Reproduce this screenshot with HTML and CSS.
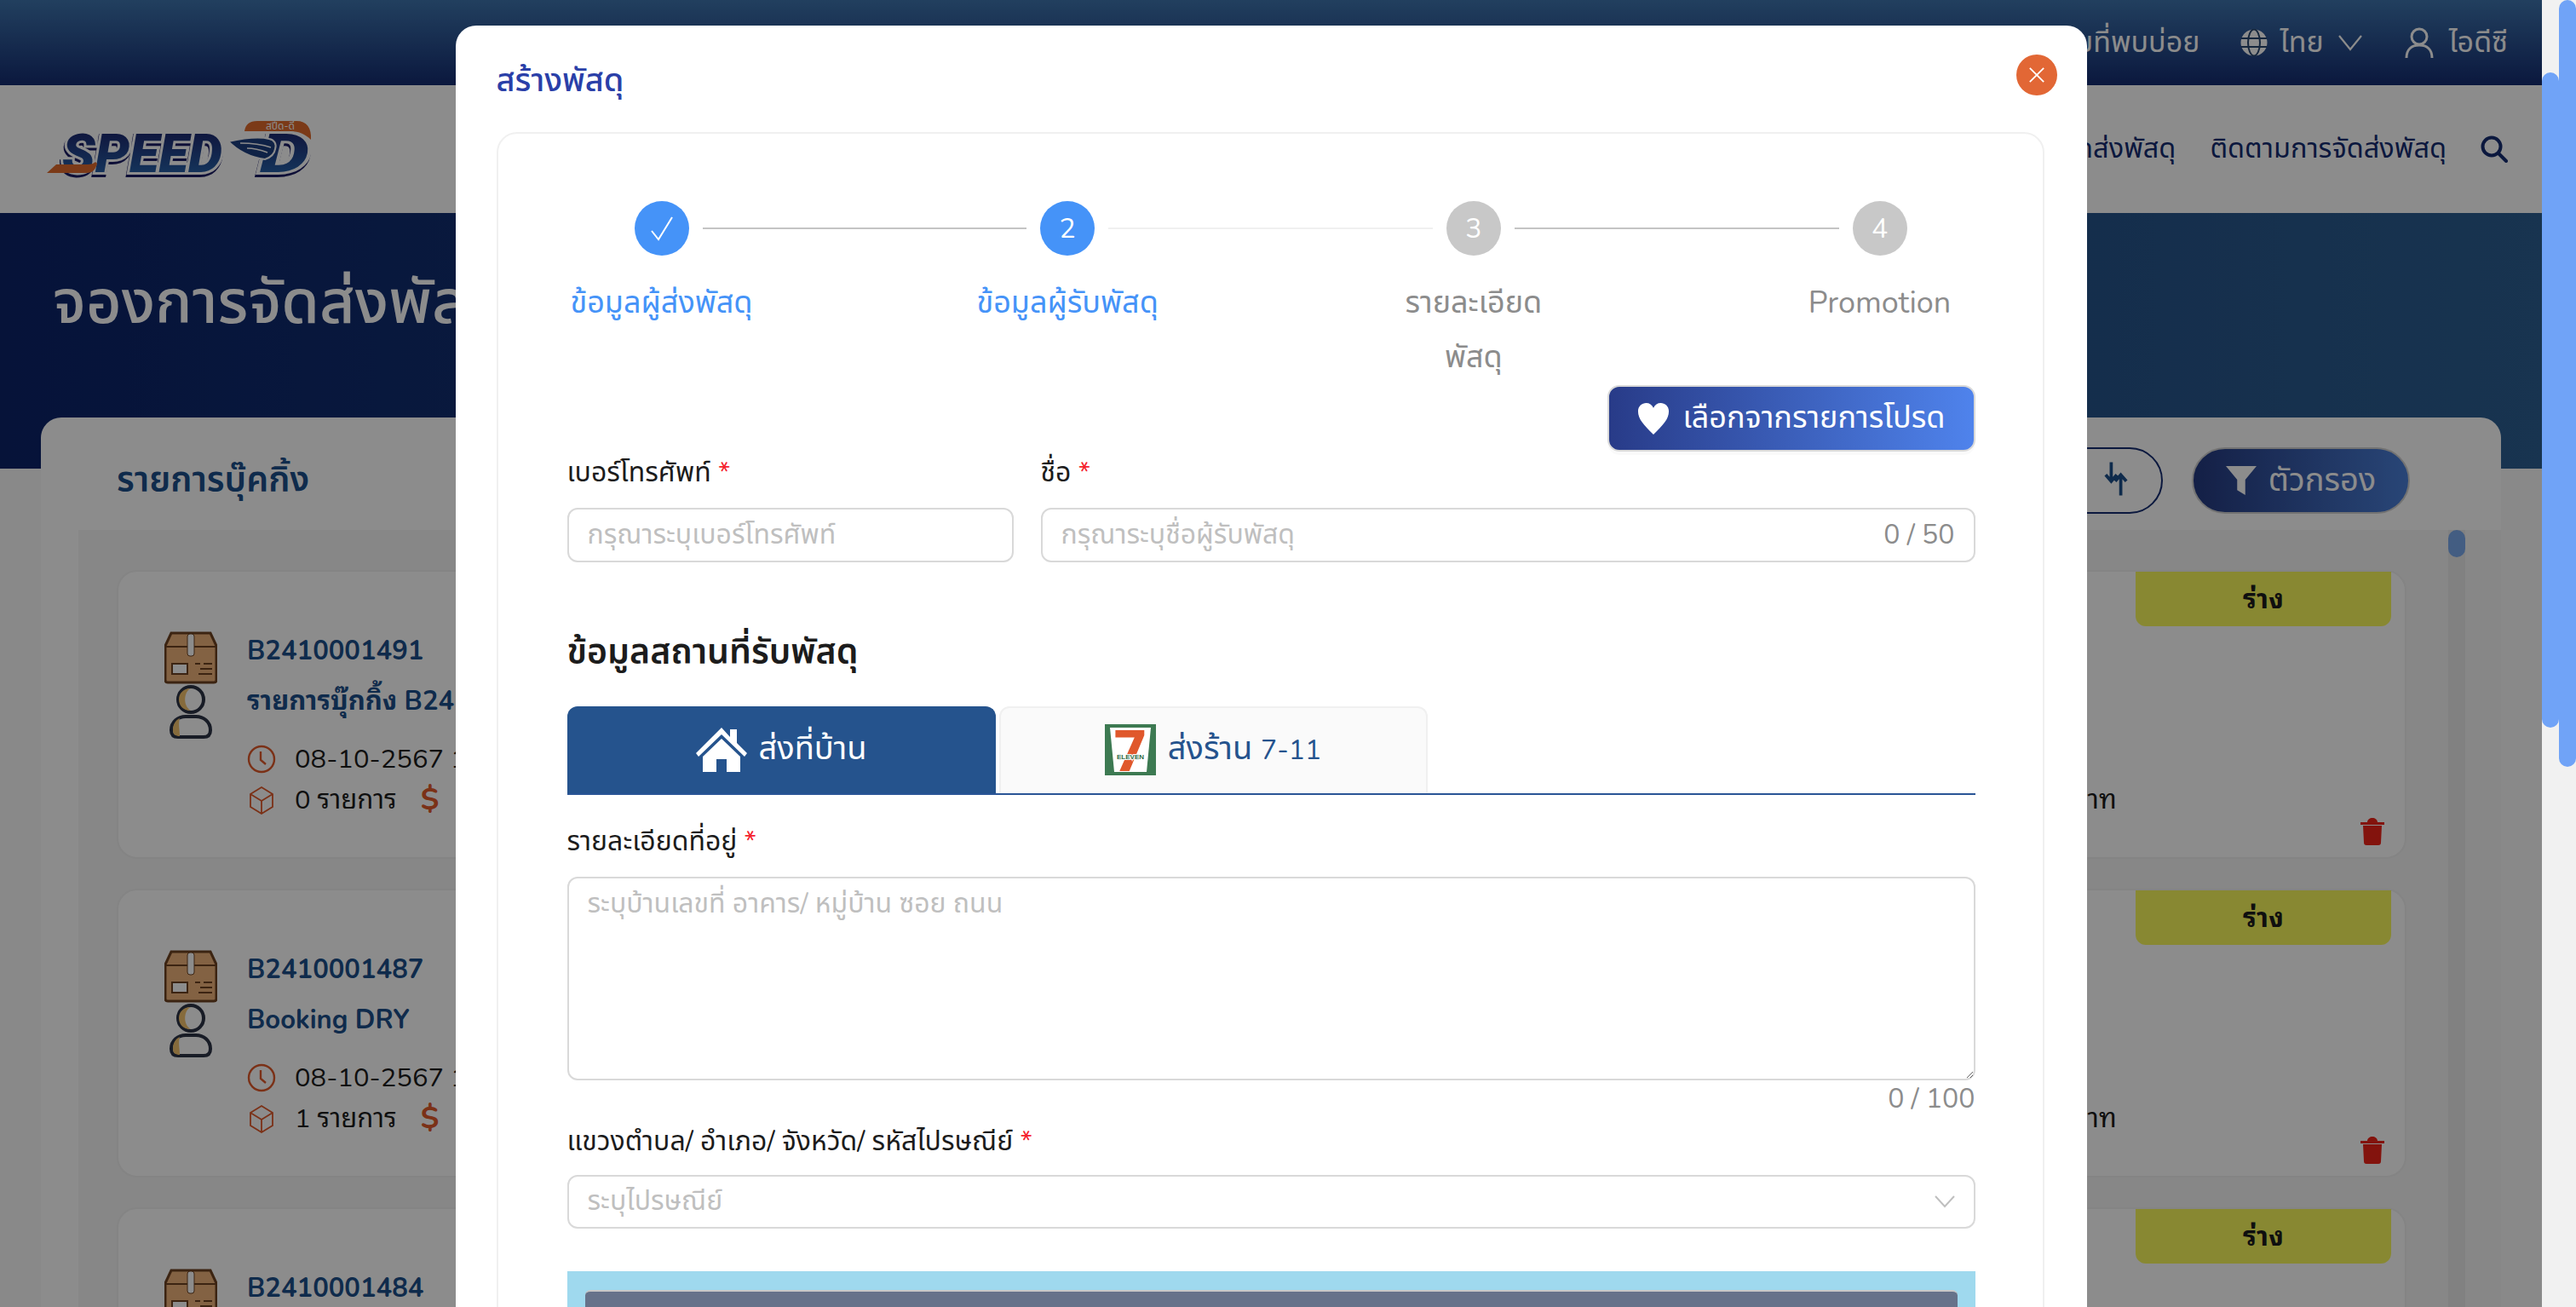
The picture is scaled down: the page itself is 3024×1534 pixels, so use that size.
FILE: index.html
```html
<!DOCTYPE html>
<html lang="th">
<head>
    <meta charset="UTF-8">
    <title>Speed-D</title>
    <link rel="stylesheet" href="styles.css">
</head>
<body>

<div class="app">
    <div class="topbar">
        <span class="topbar--item">คำถามที่พบบ่อย</span>
        <span class="topbar--item">
            <svg class="ic-globe" viewBox="0 0 32 32"><circle cx="16" cy="16" r="15.5" fill="#fff"/><g fill="none" stroke="#27466f" stroke-width="2"><ellipse cx="16" cy="16" rx="7" ry="15.5"/><path d="M1 11h30M1 21h30"/></g></svg>
            ไทย
            <svg class="ic-chev" viewBox="0 0 28 20"><path d="M1 2l13 16L27 2" fill="none" stroke="#fff" stroke-width="2.2"/></svg>
        </span>
        <span class="topbar--item topbar--user">
            <svg class="ic-user" viewBox="0 0 34 36"><g fill="none" stroke="#fff" stroke-width="3"><circle cx="17" cy="11" r="9"/><path d="M2 36c0-10 6-15 15-15s15 5 15 15"/></g></svg>
            ไอดีซี
        </span>
    </div>

    <div class="navbar">
        <svg class="logo" viewBox="0 0 320 74">
            <defs>
                <linearGradient id="logoblue" x1="0" y1="0" x2="0" y2="1"><stop offset="0" stop-color="#1a1c64"/><stop offset="1" stop-color="#2a6fb5"/></linearGradient>
            </defs>
            <path d="M234 20c0-12 6-18 18-18h46c14 0 21 10 21 24 0 22-14 42-36 42h-28z" fill="#fff"/>
            <path d="M237 16c1-8 6-12 15-12h46c12 0 18 8 17 22-6-6-14-10-24-10z" fill="#e06a2c"/>
            <text class="logo--small" x="262" y="14">สปีด-ดี</text>
            <g class="logo--shadow">
                <text class="logo--brand" x="23" y="64" textLength="188" lengthAdjust="spacingAndGlyphs">SPEED</text>
                <text class="logo--brand" x="255" y="64" textLength="58" lengthAdjust="spacingAndGlyphs">D</text>
            </g>
            <path d="M5 65h46c7 0 11-3 13-11l-2-2c-2 2-5 3-9 3H16z" fill="#e06a2c"/>
            <path d="M218 28c14-3 36-6 48-3 6 1 9 6 7 12-1 7-6 10-12 12-16-2-32-10-43-21z" fill="#1d3f80" stroke="#fff" stroke-width="2"/>
            <path d="M232 30c10 0 24 1 36 5M240 36c8 0 16 2 24 5" stroke="#fff" stroke-width="1.4" fill="none"/>
        </svg>
        <div class="navbar--menu">
            <span>จองการจัดส่งพัสดุ</span>
            <span>ติดตามการจัดส่งพัสดุ</span>
            <svg class="ic-search" viewBox="0 0 32 32"><circle cx="13" cy="13" r="10.5" fill="none" stroke="#142c71" stroke-width="4"/><path d="M21 21l9 9" stroke="#142c71" stroke-width="4" stroke-linecap="round"/></svg>
        </div>
    </div>

    <div class="hero">จองการจัดส่งพัสดุ</div>

    <div class="panel">
        <div class="panel--head">
            <div class="panel--title">รายการบุ๊คกิ้ง</div>
            <div class="panel--tools">
                <button class="btn-sort">
                    <svg viewBox="0 0 30 44"><path d="M9 1v24M2 17l7 8 7-8M21 43V18M14 25l7-8 7 8" fill="none" stroke="#1c4f8a" stroke-width="4"/></svg>
                </button>
                <button class="btn-filter">
                    <svg viewBox="0 0 38 38"><path d="M0 1h38L24 18v19l-10-6V18z" fill="#fff"/></svg>
                    ตัวกรอง
                </button>
            </div>
        </div>
        <div class="listwrap">
            <div class="list">
                <div class="card">
                    <div class="card--left">
                        <svg class="ic-parcel"><use href="#parcel"/></svg>
                        <div class="card--info">
                            <div class="card--id">B2410001491</div>
                            <div class="card--id">รายการบุ๊กกิ้ง B2410001491</div>
                            <div class="card--meta"><svg class="ic-meta"><use href="#clock"/></svg>08-10-2567 14:20</div>
                            <div class="card--meta"><svg class="ic-meta"><use href="#cube"/></svg>0 รายการ <span class="dollar">$</span></div>
                        </div>
                    </div>
                    <div class="card--right">
                        <div class="badge">ร่าง</div>
                        <div class="card--foot">
                            <span class="card--price">0 บาท</span>
                            <svg class="ic-trash"><use href="#trash"/></svg>
                        </div>
                    </div>
                </div>
                <div class="card">
                    <div class="card--left">
                        <svg class="ic-parcel"><use href="#parcel"/></svg>
                        <div class="card--info">
                            <div class="card--id">B2410001487</div>
                            <div class="card--id">Booking DRY</div>
                            <div class="card--meta"><svg class="ic-meta"><use href="#clock"/></svg>08-10-2567 13:45</div>
                            <div class="card--meta"><svg class="ic-meta"><use href="#cube"/></svg>1 รายการ <span class="dollar">$</span></div>
                        </div>
                    </div>
                    <div class="card--right">
                        <div class="badge">ร่าง</div>
                        <div class="card--foot">
                            <span class="card--price">0 บาท</span>
                            <svg class="ic-trash"><use href="#trash"/></svg>
                        </div>
                    </div>
                </div>
                <div class="card">
                    <div class="card--left">
                        <svg class="ic-parcel"><use href="#parcel"/></svg>
                        <div class="card--info">
                            <div class="card--id">B2410001484</div>
                        </div>
                    </div>
                    <div class="card--right">
                        <div class="badge">ร่าง</div>
                    </div>
                </div>
            </div>
            <div class="listbar"><div class="listbar--thumb"></div></div>
        </div>
    </div>

    <div class="overlay">
        <div class="modal">
            <div class="modal--head">
                <div class="modal--title">สร้างพัสดุ</div>
                <div class="modal--close">
                    <svg viewBox="0 0 22 22"><path d="M2 2l18 18M20 2L2 20" stroke="#fff" stroke-width="2"/></svg>
                </div>
            </div>
            <div class="modal--card">
                <div class="steps">
                    <div class="step is-active">
                        <div class="step--dot"><svg viewBox="0 0 28 30"><path d="M2 18l8 10L26 2" fill="none" stroke="#fff" stroke-width="2"/></svg></div>
                        <div class="step--title">ข้อมูลผู้ส่งพัสดุ</div>
                    </div>
                    <div class="step--line"></div>
                    <div class="step is-active">
                        <div class="step--dot">2</div>
                        <div class="step--title">ข้อมูลผู้รับพัสดุ</div>
                    </div>
                    <div class="step--line is-light"></div>
                    <div class="step">
                        <div class="step--dot">3</div>
                        <div class="step--title">รายละเอียด<br>พัสดุ</div>
                    </div>
                    <div class="step--line"></div>
                    <div class="step">
                        <div class="step--dot">4</div>
                        <div class="step--title">Promotion</div>
                    </div>
                </div>

                <div class="favrow">
                    <button class="btn-fav">
                        <svg viewBox="0 0 40 40"><path d="M20 40C8 28 1 21 1 11 1 5 6 1 11 1c4 0 7 2 9 6 2-4 5-6 9-6 5 0 10 4 10 10 0 10-7 17-19 29z" fill="#fff"/></svg>
                        เลือกจากรายการโปรด
                    </button>
                </div>

                <div class="form-row">
                    <div class="field field-phone">
                        <label class="field--label">เบอร์โทรศัพท์ <i>*</i></label>
                        <input class="input" placeholder="กรุณาระบุเบอร์โทรศัพท์">
                    </div>
                    <div class="field field-name">
                        <label class="field--label">ชื่อ <i>*</i></label>
                        <div class="input input-count">
                            <input placeholder="กรุณาระบุชื่อผู้รับพัสดุ">
                            <span>0 / 50</span>
                        </div>
                    </div>
                </div>

                <h3 class="section">ข้อมูลสถานที่รับพัสดุ</h3>

                <div class="tabs">
                    <div class="tab is-active">
                        <svg class="ic-home" viewBox="0 0 60 52"><path d="M30 0L20 10 0 30l3 4L30 8l27 26 3-4-12-12V2h-8v9z" fill="#fff"/><path d="M8 34L30 13l22 21v18H36V37H24v15H8z" fill="#fff"/></svg>
                        ส่งที่บ้าน
                    </div>
                    <div class="tab">
                        <svg class="ic-seven" viewBox="0 0 60 60">
                            <rect width="60" height="60" fill="#3d7a52"/>
                            <path d="M6 4h48l-5 52H11z" fill="#fff"/>
                            <text class="seven--num" x="30" y="55" text-anchor="middle">7</text>
                            <text class="seven--name" x="30" y="41" text-anchor="middle">ELEVEN</text>
                        </svg>
                        <span>ส่งร้าน <span class="tab--num">7-11</span></span>
                    </div>
                </div>

                <label class="field--label label-addr">รายละเอียดที่อยู่ <i>*</i></label>
                <textarea class="input area" placeholder="ระบุบ้านเลขที่ อาคาร/ หมู่บ้าน ซอย ถนน"></textarea>
                <div class="area-count">0 / 100</div>

                <label class="field--label label-zip">แขวงตำบล/ อำเภอ/ จังหวัด/ รหัสไปรษณีย์ <i>*</i></label>
                <div class="input select">
                    <span>ระบุไปรษณีย์</span>
                    <svg viewBox="0 0 24 16"><path d="M1 2l11 12L23 2" fill="none" stroke="#bfbfbf" stroke-width="2"/></svg>
                </div>

                <div class="mapbox"><div class="mapbox--inner"></div></div>
            </div>
        </div>
    </div>
</div>

<div class="scrollbars">
    <div class="sb sb-first"></div>
    <div class="sb sb-second"></div>
</div>

<svg class="defs" width="0" height="0">
    <symbol id="parcel" viewBox="0 0 62 126">
        <path d="M8 2h46l7 15v40c0 2-1 3-3 3H4c-2 0-3-1-3-3V17z" fill="#eeb27a" stroke="#6e4322" stroke-width="3"/>
        <path d="M2 18h58" stroke="#6e4322" stroke-width="2"/>
        <rect x="27" y="3" width="8" height="26" rx="3" fill="#fff" stroke="#6e4322" stroke-width="1"/>
        <rect x="9" y="38" width="18" height="12" fill="#fff" stroke="#6e4322" stroke-width="2"/>
        <path d="M36 38h6M46 38h10M42 44h14M40 50h16" stroke="#6e4322" stroke-width="2"/>
        <circle cx="31" cy="80" r="15" fill="#fff" stroke="#2c3346" stroke-width="4"/>
        <path d="M31 67c-8 3-10 20 0 26-9 0-14-6-14-13s5-13 14-13z" fill="#f5c46e"/>
        <path d="M16 124c-5 0-8-2-8-8 0-10 8-16 17-16h12c9 0 17 6 17 16 0 6-3 8-8 8z" fill="#fff" stroke="#2c3346" stroke-width="4"/>
        <path d="M18 102c-6 3-8 8-8 14 0 5 3 7 8 7 0-8-2-14 0-21z" fill="#f5c46e"/>
    </symbol>
    <symbol id="clock" viewBox="0 0 34 34">
        <circle cx="17" cy="17" r="15" fill="none" stroke="#e0592a" stroke-width="2.4"/>
        <path d="M16 8v10l6 5" fill="none" stroke="#e0592a" stroke-width="2.4"/>
    </symbol>
    <symbol id="cube" viewBox="0 0 34 34">
        <path d="M17 2l13 8v15l-13 8-13-8V10zM4 10l13 8 13-8M17 18v15" fill="none" stroke="#e0592a" stroke-width="1.8"/>
    </symbol>
    <symbol id="trash" viewBox="0 0 28 32">
        <path d="M0 5h28v3H0zM8 5c0-3 3-5 6-5s6 2 6 5z" fill="#ee2318"/>
        <path d="M3 9h22l-1 20c0 2-1 3-3 3H7c-2 0-3-1-3-3z" fill="#ee2318"/>
    </symbol>
</svg>

</body>
</html>
```

FILE: styles.css
```css
html, body {
    height: 100%;
    overflow: hidden;
}
body {
    margin: 0;
    display: flex;
    font-family: 'Nunito', 'Noto Sans Thai', sans-serif;
    font-size: 32px;
    color: #1c1c1c;
    background-color: #f1f1f1;
}
button {
    font-family: inherit;
}
.defs {
    position: absolute;
}

.app {
    position: relative;
    width: 2984px;
    height: 1534px;
    overflow: hidden;
    background-color: #fafafa;
}

/* top bars */
.topbar {
    height: 100px;
    display: flex;
    justify-content: flex-end;
    align-items: center;
    gap: 48px;
    padding-right: 40px;
    color: #fff;
    font-size: 34px;
    background: linear-gradient(#3e74ad, #142c71);
}
.topbar--item {
    display: flex;
    align-items: center;
    gap: 14px;
}
.topbar--user {
    margin-left: 2px;
}
.ic-globe { width: 32px; height: 32px; }
.ic-chev { width: 28px; height: 20px; margin-left: 3px; }
.ic-user { width: 34px; height: 36px; margin-right: 4px; }

.navbar {
    height: 150px;
    display: flex;
    justify-content: space-between;
    align-items: center;
    padding: 0 40px 0 50px;
    background-color: #fff;
}
.logo {
    width: 320px;
    height: 74px;
    overflow: visible;
}
.logo--shadow {
    filter: drop-shadow(-1px 3px 0 #1a1c64);
}
.logo--brand {
    font-family: 'Roboto', sans-serif;
    font-weight: 900;
    font-style: italic;
    font-size: 63px;
    fill: url(#logoblue);
    stroke: #fff;
    stroke-width: 6;
    paint-order: stroke;
}
.logo--small {
    font-size: 12px;
    fill: #fff;
}
.navbar--menu {
    display: flex;
    align-items: center;
    gap: 40px;
    font-size: 32.5px;
    color: #142c71;
}
.ic-search { width: 32px; height: 32px; margin-left: 0; }

.hero {
    height: 300px;
    box-sizing: border-box;
    padding: 60px 62px 0;
    font-size: 72px;
    line-height: 90px;
    font-weight: 500;
    color: #fff;
    background: linear-gradient(90deg, #0b2369, #2c5f92);
}

/* booking panel */
.panel {
    margin: -60px 48px 0;
    background-color: #fff;
    border-radius: 24px 24px 0 0;
}
.panel--head {
    height: 132px;
    display: flex;
    justify-content: space-between;
    align-items: center;
    padding: 16px 107px 0 89px;
    box-sizing: border-box;
}
.panel--title {
    font-size: 41px;
    font-weight: 600;
    color: #1c4f8a;
}
.panel--tools {
    display: flex;
    gap: 34px;
}
.btn-sort {
    width: 160px;
    height: 78px;
    border: 2px solid #142c71;
    border-radius: 40px;
    background: #fff;
    padding: 0 0 0 50px;
}
.btn-sort svg { width: 28px; height: 42px; }
.btn-filter {
    width: 256px;
    height: 78px;
    border: 2px solid #d0d0d0;
    border-radius: 40px;
    display: flex;
    align-items: center;
    justify-content: center;
    gap: 14px;
    font-size: 38px;
    color: #fff;
    background: linear-gradient(90deg, #253a80, #4a7fd8);
}
.btn-filter svg { width: 36px; height: 36px; }

.listwrap {
    margin-left: 44px;
    display: flex;
    background-color: #f6f6f6;
    height: 912px;
    font-family: 'Nunito', 'Noto Sans Thai Looped', sans-serif;
}
.list {
    width: 2688px;
    margin-left: 45px;
    padding-top: 47px;
    display: flex;
    flex-direction: column;
    gap: 35px;
}
.listbar {
    width: 20px;
    margin-left: 49px;
    background-color: #ebebeb;
}
.listbar--thumb {
    height: 32px;
    border-radius: 10px;
    background-color: #7aa9ed;
}
.card {
    height: 339px;
    flex: none;
    box-sizing: border-box;
    border: 2px solid #f0f0f0;
    border-radius: 24px;
    background-color: #fff;
    display: flex;
    justify-content: space-between;
    padding-right: 16px;
}
.card--left {
    display: flex;
    gap: 35px;
    padding: 70px 0 0 54px;
}
.ic-parcel {
    width: 62px;
    height: 126px;
}
.card--info {
    display: flex;
    flex-direction: column;
}
.card--id {
    font-size: 31px;
    line-height: 59px;
    font-weight: 700;
    color: #1c4f8a;
}
.card--id:first-child {
    margin-top: -6px;
}
.card--meta {
    display: flex;
    align-items: center;
    font-size: 31px;
    line-height: 48px;
}
.card--id + .card--meta {
    margin-top: 14px;
}
.ic-meta {
    width: 34px;
    height: 34px;
    margin-right: 22px;
}
.dollar {
    margin-left: 28px;
    font-size: 36px;
    font-weight: 700;
    color: #e0592a;
}
.card--right {
    width: 480px;
    display: flex;
    flex-direction: column;
    align-items: flex-end;
}
.badge {
    width: 300px;
    height: 64px;
    box-sizing: border-box;
    padding-bottom: 8px;
    display: flex;
    align-items: center;
    justify-content: center;
    border-radius: 0 0 12px 12px;
    font-size: 32px;
    font-weight: 700;
    background-color: #f8f85c;
}
.card--foot {
    width: 100%;
    margin-top: 180px;
    display: flex;
    justify-content: space-between;
    align-items: flex-start;
    font-size: 32px;
    line-height: 48px;
}
.card--price {
    width: 158px;
    text-align: right;
}
.ic-trash {
    width: 28px;
    height: 32px;
    margin: 45px 8px 0 0;
}

/* modal */
.overlay {
    position: absolute;
    top: 0;
    right: 0;
    bottom: 0;
    left: 0;
    display: flex;
    justify-content: center;
    padding-top: 30px;
    background-color: rgba(0, 0, 0, .45);
}
.modal {
    width: 1915px;
    height: 1600px;
    flex: none;
    box-sizing: border-box;
    padding: 0 50px 0 48px;
    background-color: #fff;
    border-radius: 24px;
}
.modal--head {
    height: 125px;
    display: flex;
    justify-content: space-between;
    align-items: flex-start;
}
.modal--title {
    margin-top: 40px;
    font-size: 38px;
    line-height: 50px;
    font-weight: 500;
    color: #2a3fa8;
}
.modal--close {
    width: 48px;
    height: 48px;
    margin: 34px -15px 0 0;
    border-radius: 50%;
    display: flex;
    align-items: center;
    justify-content: center;
    background-color: #e26735;
}
.modal--close svg { width: 20px; height: 20px; }
.modal--card {
    box-sizing: border-box;
    height: 1500px;
    padding: 79px 79px 0 81px;
    border: 2px solid #f0f0f0;
    border-radius: 24px;
}

/* steps */
.steps {
    display: flex;
    margin: 0 -8px 0 -9px;
}
.step {
    width: 240px;
    flex: none;
    display: flex;
    flex-direction: column;
    align-items: center;
}
.step--dot {
    width: 64px;
    height: 64px;
    border-radius: 50%;
    display: flex;
    align-items: center;
    justify-content: center;
    font-size: 32px;
    color: #fff;
    background-color: #c8c8c8;
}
.step--dot svg { width: 28px; height: 30px; }
.step--title {
    margin-top: 24px;
    font-size: 36px;
    line-height: 64px;
    text-align: center;
    color: #8c8c8c;
}
.step--line {
    flex: 1;
    height: 2px;
    margin: 31px -72px 0;
    background-color: #c4c4c4;
}
.step--line.is-light {
    background-color: #f0f0f0;
}
.step.is-active .step--dot {
    background-color: #4593f8;
}
.step.is-active .step--title {
    color: #4593f8;
}

/* form */
.favrow {
    display: flex;
    justify-content: flex-end;
}
.btn-fav {
    width: 432px;
    height: 78px;
    border: 2px solid #d9d9d9;
    border-radius: 14px;
    display: flex;
    align-items: center;
    justify-content: center;
    gap: 14px;
    padding: 0;
    font-size: 36px;
    color: #fff;
    background: linear-gradient(90deg, #283b88, #4f83ec);
    box-shadow: 0 4px 0 rgba(0, 0, 0, .02);
}
.btn-fav svg { width: 40px; height: 38px; }
.form-row {
    display: flex;
    gap: 32px;
}
.field-phone { width: 524px; }
.field-name { flex: 1; }
.field--label {
    display: block;
    height: 46px;
    line-height: 50px;
    margin-bottom: 20px;
    font-size: 32px;
}
.field--label i {
    font-style: normal;
    color: #f5222d;
}
.input {
    display: block;
    width: 100%;
    height: 64px;
    box-sizing: border-box;
    padding: 0 22px 2px;
    border: 2px solid #d9d9d9;
    border-radius: 12px;
    font-family: inherit;
    font-size: 32px;
    color: #1c1c1c;
    background-color: #fff;
}
.input::placeholder,
.input input::placeholder {
    color: #bfbfbf;
}
.input-count {
    display: flex;
    align-items: center;
}
.input-count input {
    flex: 1;
    border: 0;
    outline: 0;
    padding: 0;
    font-family: inherit;
    font-size: 32px;
}
.input-count span {
    color: #8c8c8c;
}
.section {
    margin: 76px 0 33px;
    font-size: 41px;
    line-height: 60px;
    font-weight: 600;
}
.tabs {
    display: flex;
    gap: 4px;
    height: 102px;
    border-bottom: 2px solid #2a5596;
}
.tab {
    width: 503px;
    box-sizing: border-box;
    padding-bottom: 3px;
    display: flex;
    align-items: center;
    justify-content: center;
    gap: 14px;
    border: 2px solid #f0f0f0;
    border-bottom: 0;
    border-radius: 12px 12px 0 0;
    font-size: 38px;
    color: #25538d;
    background-color: #fafafa;
}
.tab--num {
    font-size: 32px;
}
.tab.is-active {
    border-color: #25538d;
    color: #fff;
    background-color: #25538d;
}
.ic-home { width: 60px; height: 52px; }
.ic-seven { width: 60px; height: 60px; overflow: visible; }
.seven--num {
    font-family: 'Roboto', sans-serif;
    font-weight: 900;
    font-size: 66px;
    fill: #e0582c;
}
.seven--name {
    font-family: 'Liberation Sans', sans-serif;
    font-weight: 700;
    font-size: 8px;
    fill: #2d6b45;
    stroke: #fff;
    stroke-width: 2;
    paint-order: stroke;
}
.label-addr {
    margin-top: 30px;
}
.area {
    height: 239px;
    padding: 6px 22px;
    resize: vertical;
}
.area-count {
    height: 36px;
    margin-top: 4px;
    line-height: 36px;
    text-align: right;
    color: #8c8c8c;
}
.label-zip {
    margin: 7px 0 18px;
}
.select {
    display: flex;
    align-items: center;
    justify-content: space-between;
    height: 63px;
    color: #bfbfbf;
}
.select svg { width: 24px; height: 16px; }
.mapbox {
    margin-top: 50px;
    height: 200px;
    padding: 22px 21px 0;
    background-color: #9fd9ee;
}
.mapbox--inner {
    height: 100%;
    border-top: 2px solid #c8c8c8;
    border-radius: 6px 6px 0 0;
    background-color: #66728a;
}

/* page scrollbars */
.scrollbars {
    width: 40px;
    display: flex;
    flex: none;
}
.sb {
    width: 20px;
    border-radius: 10px;
    background-color: #70a3f7;
}
.sb-first {
    height: 769px;
    margin-top: 85px;
}
.sb-second {
    height: 900px;
}
```
